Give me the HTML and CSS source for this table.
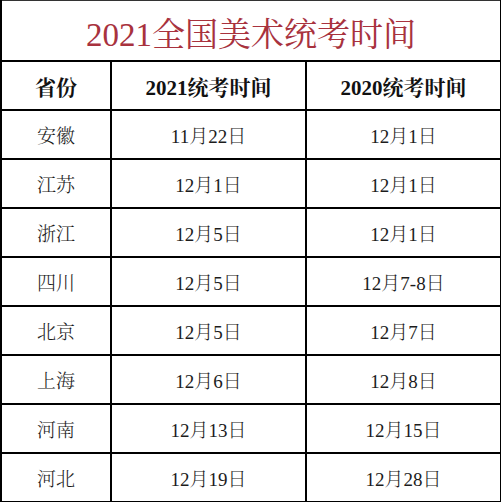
FILE: index.html
```html
<!DOCTYPE html>
<html lang="zh-CN">
<head>
<meta charset="utf-8">
<link rel="stylesheet" href="styles.css">
</head>
<body>
<table class="schedule">
  <colgroup>
    <col class="col-prov">
    <col class="col-date">
    <col class="col-date">
  </colgroup>
  <tr class="title-row"><th colspan="3" class="title">2021全国美术统考时间</th></tr>
  <tr class="head-row"><th>省份</th><th>2021统考时间</th><th>2020统考时间</th></tr>
  <tr><td>安徽</td><td>11月22日</td><td>12月1日</td></tr>
  <tr><td>江苏</td><td>12月1日</td><td>12月1日</td></tr>
  <tr><td>浙江</td><td>12月5日</td><td>12月1日</td></tr>
  <tr><td>四川</td><td>12月5日</td><td>12月7-8日</td></tr>
  <tr><td>北京</td><td>12月5日</td><td>12月7日</td></tr>
  <tr><td>上海</td><td>12月6日</td><td>12月8日</td></tr>
  <tr><td>河南</td><td>12月13日</td><td>12月15日</td></tr>
  <tr><td>河北</td><td>12月19日</td><td>12月28日</td></tr>
</table>
</body>
</html>
```

FILE: styles.css
```css
html, body {
  margin: 0;
  padding: 0;
  background: #ffffff;
}

.schedule {
  border-collapse: collapse;
  table-layout: fixed;
  width: 500px;
  font-family: "Liberation Serif", "Noto Serif CJK SC", "Noto Sans CJK SC", serif;
  color: #1c1c1c;
}

.col-prov { width: 110px; }
.col-date { width: 195px; }

.schedule th,
.schedule td {
  border: 2px solid #000;
  padding: 0;
  text-align: center;
  vertical-align: middle;
  height: 47px;
  font-size: 19px;
  font-weight: 300;
}

.schedule .title {
  height: 57px;
  border-top: 1px solid #333;
  font-size: 33px;
  font-weight: 400;
  color: #a8323e;
  padding-top: 2px;
}

.head-row th {
  font-size: 21px;
  font-weight: 700;
  color: #111;
}
```
